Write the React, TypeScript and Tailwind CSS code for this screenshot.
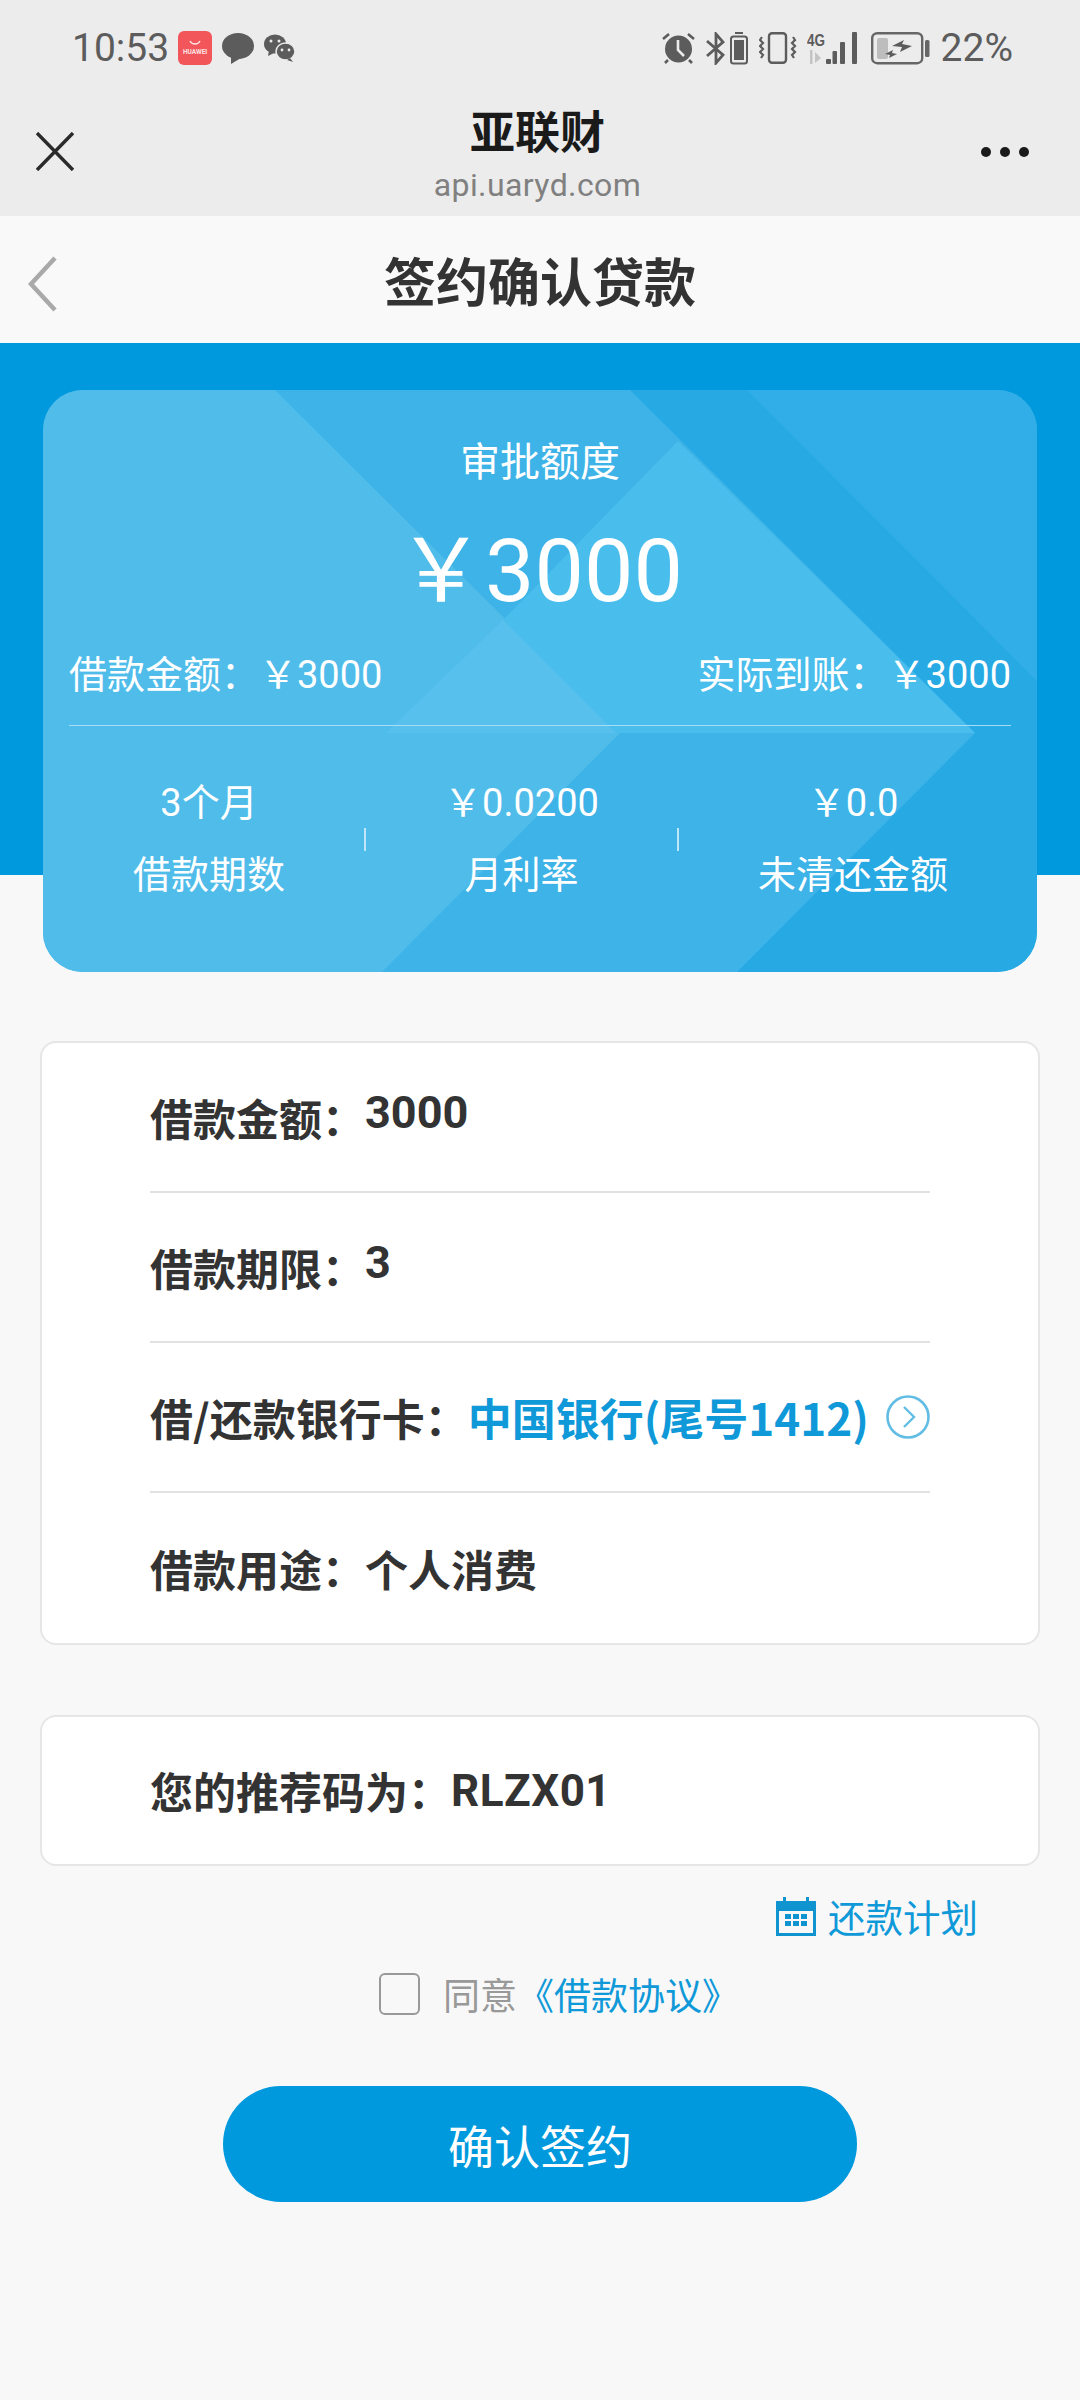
import React from 'react';

const infoRows = [
  { label: '借款金额：', value: '3000' },
  { label: '借款期限：', value: '3' },
];

const AlarmIcon = () => (
  <svg width="35" height="32" viewBox="0 0 35 32" fill="none">
    <circle cx="17.5" cy="17" r="13.5" fill="#5c5c5c" />
    <path d="M17 8v10l6 6" stroke="#ececec" strokeWidth="2.6" />
    <path d="M2 7l6-5M33 7l-6-5M7 28l-3 3M28 28l3 3" stroke="#5c5c5c" strokeWidth="2.6" />
  </svg>
);

const BluetoothBatteryIcon = () => (
  <svg width="43" height="33" viewBox="0 0 43 33" fill="none">
    <path d="M1 9l16 14-7 8V2l7 8L1 24" stroke="#5c5c5c" strokeWidth="2.8" />
    <rect x="25" y="4.5" width="16" height="27" rx="2.5" stroke="#5c5c5c" strokeWidth="2" />
    <rect x="28" y="8" width="10" height="20" fill="#5c5c5c" />
    <rect x="29" y="0" width="8" height="2" fill="#5c5c5c" />
  </svg>
);

const VibrateIcon = () => (
  <svg width="38" height="32" viewBox="0 0 38 32" fill="none">
    <rect x="10" y="1.2" width="17" height="29.6" rx="3" stroke="#5c5c5c" strokeWidth="2.4" />
    <path d="M3 5l-2 3 3 3-3 3 3 3-3 3 3 3-2 3M34 5l2 3-3 3 3 3-3 3 3 3-3 3 2 3" stroke="#5c5c5c" strokeWidth="2.2" />
  </svg>
);

const SignalIcon = () => (
  <svg width="50" height="33" viewBox="0 0 50 33">
    <text x="0" y="14" fontSize="17" fontWeight="700" fill="#5c5c5c" fontFamily="'Liberation Sans', sans-serif" textLength="18" lengthAdjust="spacingAndGlyphs">4G</text>
    <path d="M3 18h2.5v14H3zM8 20l6 6-6 5z" fill="#c4c4c4" />
    <rect x="19" y="27" width="5" height="5" rx="1" fill="#5c5c5c" />
    <rect x="25.5" y="19" width="4.5" height="13" rx="1" fill="#5c5c5c" />
    <rect x="33" y="10" width="5" height="22" rx="1" fill="#5c5c5c" />
    <rect x="45" y="0" width="5" height="32" rx="1" fill="#5c5c5c" />
  </svg>
);

const BatteryIcon = () => (
  <svg width="59" height="33" viewBox="0 0 59 33" fill="none">
    <rect x="1.2" y="1.2" width="50" height="30" rx="5" stroke="#666666" strokeWidth="2.4" />
    <rect x="6" y="6" width="11" height="21" rx="2" fill="#bdbdbd" />
    <path d="M21 14l12-6-2 4 10 2-12 6 2-5zM14 22l8-4-1 3 5 1-8 4 1-3z" fill="#5c5c5c" />
    <rect x="54" y="8" width="4.5" height="17" rx="1.5" fill="#666666" />
  </svg>
);

const StatusBar = () => (
  <div className="h-[85px] flex items-start justify-between pt-[28px] pl-[72px] pr-[67px] text-[#5c5c5c] font-['Roboto',sans-serif] text-[39px] leading-[40px]">
    <div className="flex items-center">
      <span>10:53</span>
      {/* huawei store app icon */}
      <div className="ml-[9px] w-[34px] h-[34px] rounded-[6px] bg-[#f2565a] flex flex-col items-center justify-center">
        <svg width="14" height="6" viewBox="0 0 14 6" fill="none">
          <path d="M2 1c2 4 8 4 10 0" stroke="#ffe3e3" strokeWidth="1.4" />
        </svg>
        <span className="text-[6.5px] leading-[9px] font-bold text-[#ffe3e3] mt-[2px]">HUAWEI</span>
      </div>
      <svg className="ml-[10px]" width="32" height="31" viewBox="0 0 32 31">
        <ellipse cx="16" cy="13" rx="16" ry="13" fill="#5c5c5c" />
        <path d="M9 23l0 8 10-6z" fill="#5c5c5c" />
      </svg>
      <svg className="ml-[10px]" width="31" height="28" viewBox="0 0 31 28">
        <ellipse cx="11" cy="10" rx="11" ry="9.5" fill="#5c5c5c" />
        <path d="M5 16l-1 6 6-3z" fill="#5c5c5c" />
        <ellipse cx="21.5" cy="17.5" rx="9.5" ry="8.5" fill="#5c5c5c" stroke="#ececec" strokeWidth="1.5" />
        <path d="M26 24l3 4-6-2z" fill="#5c5c5c" />
        <circle cx="7" cy="7" r="1.5" fill="#ececec" />
        <circle cx="15" cy="7" r="1.5" fill="#ececec" />
        <circle cx="18" cy="16" r="1.4" fill="#ececec" />
        <circle cx="25" cy="16" r="1.4" fill="#ececec" />
      </svg>
    </div>
    <div className="flex items-center">
      <AlarmIcon />
      <div className="ml-[10px]"><BluetoothBatteryIcon /></div>
      <div className="ml-[10px]"><VibrateIcon /></div>
      <div className="ml-[10px]"><SignalIcon /></div>
      <div className="ml-[14px]"><BatteryIcon /></div>
      <span className="ml-[11px]">22%</span>
    </div>
  </div>
);

const TitleBar = () => (
  <div className="h-[131px] flex justify-between pl-[36px] pr-[51px]">
    <svg className="mt-[47px]" width="38" height="39" viewBox="0 0 38 39" fill="none">
      <path d="M1 1l36 37M37 1L1 38" stroke="#2a2a2a" strokeWidth="3.4" />
    </svg>
    <div className="flex flex-col items-center pt-[18px] pl-[20px]">
      <span className="text-[45px] leading-[54px] font-bold text-[#1a1a1a] font-['Noto_Sans_CJK_SC',sans-serif]">亚联财</span>
      <span className="text-[32px] leading-[40px] mt-[8px] text-[#808080] font-['Roboto',sans-serif] tracking-[0.4px]">api.uaryd.com</span>
    </div>
    <div className="flex items-center gap-[9px] h-[10px] mt-[62px]">
      <div className="w-[10px] h-[10px] rounded-full bg-[#1a1a1a]" />
      <div className="w-[10px] h-[10px] rounded-full bg-[#1a1a1a]" />
      <div className="w-[10px] h-[10px] rounded-full bg-[#1a1a1a]" />
    </div>
  </div>
);

const LoanCard = () => (
  <div className="relative w-[994px] h-[582px] rounded-[40px] overflow-hidden bg-[#3db3e8] text-white">
    {/* background facets */}
    <svg className="absolute inset-0" width="994" height="582" viewBox="0 0 994 582">
      <polygon points="0,0 232,0 577,343 339,582 0,582" fill="#4fbcea" />
      <polygon points="587,0 994,0 994,582 694,582 932,343" fill="#27a9e3" />
      <polygon points="704,0 994,0 994,291" fill="#31aee7" />
      <polygon points="635,51 932,343 573,343 460,230" fill="#49bdec" />
      <polygon points="460,230 573,343 343,343" fill="#57c0ec" />
    </svg>
    <div className="relative flex flex-col h-full font-['Roboto','Noto_Sans_CJK_SC',sans-serif]">
      <div className="mt-[48px] text-center text-[40px] leading-[50px]">审批额度</div>
      <div className="mt-[33px] text-center text-[88px] leading-[100px]">￥3000</div>
      <div className="mt-[29px] mx-[26px] flex justify-between text-[38px] leading-[50px]">
        <span>借款金额：￥3000</span>
        <span>实际到账：￥3000</span>
      </div>
      <div className="mt-[25px] mx-[26px] h-[1px] bg-[#a6dcf5]" />
      <div className="mt-[52px] pl-[11px] flex items-center text-[38px] leading-[50px] text-center">
        <div className="w-[310px] flex flex-col gap-[22px]">
          <span>3个月</span>
          <span>借款期数</span>
        </div>
        <div className="w-[2px] h-[23px] bg-[#bfe6f8]" />
        <div className="w-[311px] flex flex-col gap-[22px]">
          <span>￥0.0200</span>
          <span>月利率</span>
        </div>
        <div className="w-[2px] h-[23px] bg-[#bfe6f8]" />
        <div className="w-[348px] flex flex-col gap-[22px]">
          <span>￥0.0</span>
          <span>未清还金额</span>
        </div>
      </div>
    </div>
  </div>
);

const Row = ({ label, children, last }: { label: string; children: React.ReactNode; last?: boolean }) => (
  <div className={`h-[150px] flex items-center ${last ? '' : 'border-b-2 border-[#e2e2e2]'}`}>
    <span>{label}</span>
    {children}
  </div>
);

const App = () => {
  return (
    <div className="w-[1080px] h-[2400px] bg-[#f8f8f8] overflow-hidden font-['Noto_Sans_CJK_SC',sans-serif]">
      <div className="bg-[#ececec]">
        <StatusBar />
        <TitleBar />
      </div>

      {/* page nav */}
      <div className="h-[127px] bg-[#f9f9f9] flex items-center relative">
        <svg className="absolute left-[28px] top-[40px]" width="30" height="56" viewBox="0 0 30 56" fill="none">
          <path d="M27 2L3 28l24 26" stroke="#a9a9a9" strokeWidth="4.5" />
        </svg>
        <h1 className="w-full text-center text-[52px] leading-[64px] font-bold text-[#333333]">签约确认贷款</h1>
      </div>

      {/* blue band, the card hangs below it */}
      <div className="h-[532px] bg-[#0099dd] pt-[47px] pl-[43px]">
        <LoanCard />
      </div>

      <div className="mt-[166px] mx-[40px] flex flex-col">
        <div className="h-[604px] bg-white border-2 border-[#e6e6e6] rounded-[16px] pl-[108px] pr-[108px] text-[43px] font-bold text-[#333333]">
          {infoRows.map((row) => (
            <Row key={row.label} label={row.label}>
              <span className="font-['Roboto','Noto_Sans_CJK_SC',sans-serif] font-bold text-[45px] -mt-[8px]">{row.value}</span>
            </Row>
          ))}
          <Row label="借/还款银行卡：">
            <span className="text-[#0f99d8] text-[44px]">中国银行(尾号1412)</span>
            <svg className="ml-auto" width="44" height="44" viewBox="0 0 44 44" fill="none">
              <circle cx="22" cy="22" r="20.5" stroke="#62bde4" strokeWidth="2.6" />
              <path d="M18 12l10 10-10 10" stroke="#62bde4" strokeWidth="2.4" />
            </svg>
          </Row>
          <Row label="借款用途：" last>
            <span>个人消费</span>
          </Row>
        </div>

        <div className="mt-[70px] h-[151px] bg-white border-2 border-[#e6e6e6] rounded-[16px] pl-[108px] flex items-center text-[43px] font-bold text-[#333333]">
          <span>您的推荐码为：</span>
          <span className="font-['Roboto','Noto_Sans_CJK_SC',sans-serif] font-bold text-[44px] tracking-[0.5px]">RLZX01</span>
        </div>

        <div className="mt-[28px] flex items-center justify-end pr-[62px] text-[37.5px] leading-[44px] text-[#0f99d8]">
          <svg width="40" height="40" viewBox="0 0 40 40">
            <path fillRule="evenodd" fill="#0f94d0" d="M0 5h7V1h3v4h20V1h3v4h7v35H0zM3 15v22h34V15z" />
            <path fill="#0f94d0" d="M9 18h6v5H9zM17 18h6v5h-6zM25 18h6v5h-6zM9 25h6v5H9zM17 25h6v5h-6zM25 25h6v5h-6z" />
          </svg>
          <span className="ml-[12px]">还款计划</span>
        </div>

        <div className="mt-[34px] flex items-center pl-[339px] text-[37px] leading-[44px]">
          <div className="w-[41px] h-[42px] rounded-[6px] border-2 border-[#999999]" />
          <span className="ml-[23px] text-[#999999]">同意</span>
          <span className="text-[#0f99d8]">《借款协议》</span>
        </div>

        <div className="mt-[70px] ml-[183px] w-[634px] h-[116px] rounded-full bg-[#0099dd] flex items-center justify-center text-white text-[46px]">
          确认签约
        </div>
      </div>
    </div>
  );
};

export default App;
